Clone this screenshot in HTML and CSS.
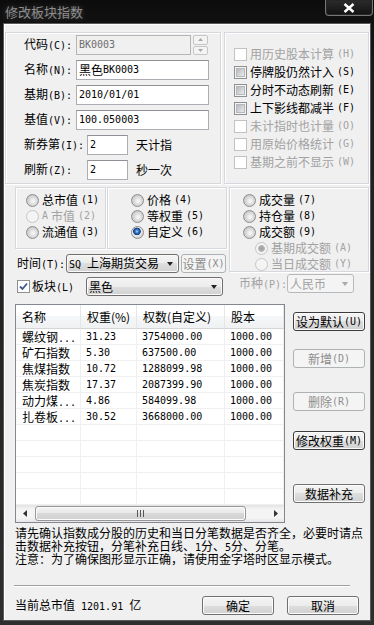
FILE: index.html
```html
<!DOCTYPE html>
<html lang="zh-CN">
<head>
  <meta charset="UTF-8" />
  <meta name="viewport" content="width=device-width, initial-scale=1.0" />
  <title>修改板块指数</title>
  <link rel="stylesheet" href="styles.css">
</head>
<body>
  <div class="window">
    <div class="titlebar">
      <div class="title">修改板块指数</div>
      <div class="close">
        <svg width="12" height="10" viewBox="0 0 12 10"><path d="M1.5 1 L10.5 9 M10.5 1 L1.5 9" stroke="#fff" stroke-width="2.4" /></svg>
      </div>
    </div>

    <div class="frame">
      <div class="content">

        <div class="top">
          <div class="panel fields">
            <div class="row">
              <span class="lab">代码<span class="l">(C):</span></span>
              <span class="input off code"><span class="l">BK0003</span></span>
              <span class="spin">
                <span class="sb"><svg width="5" height="3"><path d="M0 3 L2.5 0 L5 3Z" fill="#a8a8a8" /></svg></span>
                <span class="sb"><svg width="5" height="3"><path d="M0 0 L2.5 3 L5 0Z" fill="#a8a8a8" /></svg></span>
              </span>
            </div>
            <div class="row">
              <span class="lab">名称<span class="l">(N):</span></span>
              <span class="input wide">黑色<span class="l">BK0003</span></span>
            </div>
            <div class="row">
              <span class="lab">基期<span class="l">(B):</span></span>
              <span class="input wide"><span class="l">2010/01/01</span></span>
            </div>
            <div class="row">
              <span class="lab">基值<span class="l">(V):</span></span>
              <span class="input wide"><span class="l">100.050003</span></span>
            </div>
            <div class="row">
              <span class="lab long">新券第<span class="l">(I):</span></span>
              <span class="input small"><span class="l">2</span></span>
              <span class="after">天计指</span>
            </div>
            <div class="row">
              <span class="lab long">刷新<span class="l">(Z):</span></span>
              <span class="input small"><span class="l">2</span></span>
              <span class="after">秒一次</span>
            </div>
          </div>

          <div class="panel opts">
            <div class="chk off"><span class="cb"></span>用历史股本计算<span class="l">(H)</span></div>
            <div class="chk"><span class="cb"></span>停牌股仍然计入<span class="l">(S)</span></div>
            <div class="chk"><span class="cb"></span>分时不动态刷新<span class="l">(E)</span></div>
            <div class="chk"><span class="cb"></span>上下影线都减半<span class="l">(F)</span></div>
            <div class="chk off"><span class="cb"></span>未计指时也计量<span class="l">(O)</span></div>
            <div class="chk off"><span class="cb"></span>用原始价格统计<span class="l">(G)</span></div>
            <div class="chk off"><span class="cb"></span>基期之前不显示<span class="l">(W)</span></div>
          </div>
        </div>

        <div class="mid">
          <div class="mid-left">
            <div class="groups">
              <div class="group g1">
                <div class="opt"><span class="rb"></span>总市值<span class="l">(1)</span></div>
                <div class="opt off"><span class="rb"></span><span class="l">A</span>市值<span class="l">(2)</span></div>
                <div class="opt"><span class="rb"></span>流通值<span class="l">(3)</span></div>
              </div>
              <div class="group g2">
                <div class="opt"><span class="rb"></span>价格<span class="l">(4)</span></div>
                <div class="opt"><span class="rb"></span>等权重<span class="l">(5)</span></div>
                <div class="opt"><span class="rb on"></span>自定义<span class="l">(6)</span></div>
              </div>
            </div>
            <div class="row time">
              <span class="lab">时间<span class="l">(T):</span></span>
              <span class="combo c-time"><span><span class="l">SQ </span>上海期货交易</span><i class="arrow"></i></span>
              <span class="btn off set">设置<span class="l">(X)</span></span>
            </div>
            <div class="row block">
              <span class="cb on">
                <svg width="11" height="11" viewBox="0 0 11 11"><path d="M2 5.5 L4.5 8 L9 2.5" stroke="#3b5a8f" stroke-width="1.8" fill="none" /></svg>
              </span>
              <span class="lab">板块<span class="l">(L)</span></span>
              <span class="combo c-block"><span>黑色</span><i class="arrow"></i></span>
            </div>
          </div>

          <div class="mid-right">
            <div class="group g3">
              <div class="opt"><span class="rb"></span>成交量<span class="l">(7)</span></div>
              <div class="opt"><span class="rb"></span>持仓量<span class="l">(8)</span></div>
              <div class="opt"><span class="rb"></span>成交额<span class="l">(9)</span></div>
              <div class="opt sub off"><span class="rb on"></span>基期成交额<span class="l">(A)</span></div>
              <div class="opt sub off"><span class="rb"></span>当日成交额<span class="l">(Y)</span></div>
            </div>
            <div class="row cur off">
              <span class="lab">币种<span class="l">(P):</span></span>
              <span class="combo c-cur"><span>人民币</span><i class="arrow"></i></span>
            </div>
          </div>
        </div>

        <div class="lower">
          <div class="listview">
            <div class="grid">
              <div class="hd">名称</div>
              <div class="hd">权重(%)</div>
              <div class="hd">权数(自定义)</div>
              <div class="hd">股本</div>

              <div class="c">螺纹钢<span class="l">...</span></div>
              <div class="c l">31.23</div>
              <div class="c l">3754000.00</div>
              <div class="c l">1000.00</div>

              <div class="c">矿石指数</div>
              <div class="c l">5.30</div>
              <div class="c l">637500.00</div>
              <div class="c l">1000.00</div>

              <div class="c">焦煤指数</div>
              <div class="c l">10.72</div>
              <div class="c l">1288099.98</div>
              <div class="c l">1000.00</div>

              <div class="c">焦炭指数</div>
              <div class="c l">17.37</div>
              <div class="c l">2087399.90</div>
              <div class="c l">1000.00</div>

              <div class="c">动力煤<span class="l">...</span></div>
              <div class="c l">4.86</div>
              <div class="c l">584099.98</div>
              <div class="c l">1000.00</div>

              <div class="c">扎卷板<span class="l">...</span></div>
              <div class="c l">30.52</div>
              <div class="c l">3668000.00</div>
              <div class="c l">1000.00</div>

              <div class="c"></div><div class="c"></div><div class="c"></div><div class="c"></div>
              <div class="c"></div><div class="c"></div><div class="c"></div><div class="c"></div>
              <div class="c"></div><div class="c"></div><div class="c"></div><div class="c"></div>
              <div class="c"></div><div class="c"></div><div class="c"></div><div class="c"></div>
              <div class="c"></div><div class="c"></div><div class="c"></div><div class="c"></div>
            </div>
            <div class="hscroll">
              <span class="sarrow"><svg width="4" height="7"><path d="M4 0 L0 3.5 L4 7Z" fill="#333" /></svg></span>
              <span class="thumb">
                <svg width="7" height="7"><path d="M0.5 0 V7 M3.5 0 V7 M6.5 0 V7" stroke="#555" /></svg>
              </span>
              <span class="sarrow right"><svg width="4" height="7"><path d="M0 0 L4 3.5 L0 7Z" fill="#333" /></svg></span>
            </div>
          </div>

          <div class="side">
            <span class="btn dark b1">设为默认<span class="l">(U)</span></span>
            <span class="btn off b2">新增<span class="l">(D)</span></span>
            <span class="btn off b3">删除<span class="l">(R)</span></span>
            <span class="btn dark b4">修改权重<span class="l">(M)</span></span>
            <span class="btn b5">数据补充</span>
          </div>
        </div>

        <div class="note">
          <div>请先确认指数成分股的历史和当日分笔数据是否齐全，必要时请点</div>
          <div>击数据补充按钮，分笔补充日线、<span class="l">1</span>分、<span class="l">5</span>分、分笔。</div>
          <div>注意：为了确保图形显示正确，请使用金字塔时区显示模式。</div>
        </div>

        <div class="sep"></div>

        <div class="foot">
          <span class="total">当前总市值<span class="l"> 1201.91 </span>亿</span>
          <span class="btn ok">确定</span>
          <span class="btn cancel">取消</span>
        </div>

      </div>
    </div>
  </div>
</body>
</html>
```

FILE: styles.css
```css
* {
  box-sizing: border-box;
}

html, body {
  margin: 0;
  padding: 0;
  background: #000;
}

body {
  width: 374px;
  height: 625px;
  overflow: hidden;
  font: 12px/14px "Noto Sans CJK SC", sans-serif;
  color: #000;
}

/* half-width latin, like the bitmap font of the dialog */
.l {
  font: 10px/14px "DejaVu Sans Mono", monospace;
}

.window {
  width: 374px;
  height: 625px;
  display: flex;
  flex-direction: column;
  background: linear-gradient(#0c0c0c, #1d1d1d 80px, #2e2e2e);
}

.titlebar {
  height: 24px;
  flex-shrink: 0;
  display: flex;
  justify-content: space-between;
  align-items: flex-start;
}

.title {
  margin: 3px 0 0 5px;
  font-size: 13px;
  line-height: 17px;
  color: #8e8e8e;
  text-shadow: 0 0 6px rgba(255, 255, 255, 0.25);
}

.close {
  width: 48px;
  height: 16px;
  margin-right: 1px;
  border: 1px solid #777;
  border-top: 0;
  border-radius: 0 0 4px 4px;
  background: linear-gradient(#2c2c2c, #121212);
  box-shadow: inset 0 0 0 1px #262626;
  display: flex;
  align-items: center;
  justify-content: center;
}

.frame {
  flex: 1;
  display: flex;
  padding: 0 4px 5px;
}

.content {
  flex: 1;
  background: #f0f0f0;
  box-shadow: 0 0 0 1px #5a5a5a, inset 1px 1px 0 #fff;
  display: flex;
  flex-direction: column;
}

.off {
  color: #a2a2a2;
}

/* ---------- top panels ---------- */

.top {
  display: flex;
  gap: 3px;
  height: 152px;
  margin: 8px 0 0 1px;
}

.panel,
.group {
  border: 1px solid #d5d9dd;
  box-shadow: inset 1px 1px 0 #fff, 1px 1px 0 #fff;
}

.fields {
  width: 216px;
  padding: 2px 0 0 18px;
  display: flex;
  flex-direction: column;
  gap: 5px;
}

.row {
  display: flex;
  align-items: center;
  height: 20px;
  white-space: nowrap;
}

.fields .lab {
  width: 52px;
}

.fields .lab.long {
  width: 63px;
}

.input {
  height: 20px;
  display: flex;
  align-items: center;
  padding: 0 2px;
  background: #fff;
  border: 1px solid #abadb3;
  border-top-color: #8f9196;
}

.input.off {
  background: #f0f0f0;
  border-color: #b5b5b5;
  color: #6d6d6d;
}

.code {
  width: 115px;
}

.wide {
  width: 133px;
}

.small {
  width: 41px;
}

.after {
  margin-left: 8px;
}

.spin {
  width: 15px;
  height: 20px;
  margin-left: 2px;
  display: flex;
  flex-direction: column;
  gap: 1px;
}

.sb {
  flex: 1;
  border: 1px solid #c6c6c6;
  border-radius: 2px;
  background: #f4f4f4;
  display: flex;
  align-items: center;
  justify-content: center;
}

.opts {
  width: 145px;
  padding: 12px 0 0 9px;
}

.chk {
  display: flex;
  align-items: center;
  gap: 3px;
  height: 18px;
  white-space: nowrap;
}

/* ---------- checkbox / radio ---------- */

.cb {
  width: 13px;
  height: 13px;
  flex-shrink: 0;
  position: relative;
  border: 1px solid #8e8f8f;
  background: #f4f4f4;
}

.cb::after {
  content: "";
  position: absolute;
  inset: 1px;
  border: 1px solid #b4b8bc;
  background: linear-gradient(135deg, #b7bbbf, #e9eaeb);
}

.off .cb {
  border-color: #c2c2c2;
  background: #fff;
}

.off .cb::after {
  display: none;
}

.cb.on {
  display: flex;
  align-items: center;
  justify-content: center;
  background: #fff;
}

.cb.on::after {
  display: none;
}

.rb {
  width: 13px;
  height: 13px;
  flex-shrink: 0;
  border-radius: 50%;
  border: 1px solid #8e8f8f;
  background: radial-gradient(circle at 55% 55%, #fbfbfb 0, #e2e2e2 3px, #c9c9c9 6px);
}

.rb.on {
  background: radial-gradient(circle at 45% 40%, #9fd0ff 0, #2f6dbd 2px, #173f7d 3.5px, #f2f2f2 4.2px, #d2d2d2 6px);
}

.off .rb {
  border-color: #c6c6c6;
  background: #f4f4f4;
}

.off .rb.on {
  background: radial-gradient(circle, #9a9a9a 0, #b5b5b5 3px, #f4f4f4 3.8px);
}

/* ---------- middle section ---------- */

.mid {
  display: flex;
  gap: 2px;
  height: 110px;
  margin: 3px 0 0 11px;
}

.mid-left {
  width: 212px;
}

.groups {
  display: flex;
  gap: 1px;
  height: 62px;
}

.group {
  padding-top: 4px;
}

.g1 {
  width: 91px;
  padding-left: 10px;
}

.g2 {
  width: 120px;
  padding-left: 23px;
}

.opt {
  display: flex;
  align-items: center;
  gap: 3px;
  height: 16px;
  white-space: nowrap;
}

.time {
  height: 19px;
  margin-top: 5px;
}

.time .lab {
  width: 49px;
  margin-left: 2px;
}

.combo {
  height: 19px;
  display: flex;
  align-items: center;
  justify-content: space-between;
  padding-left: 2px;
  border: 1px solid #707070;
  border-radius: 3px;
  background: linear-gradient(#f4f4f4, #ececec 50%, #dedede 50%, #d2d2d2);
  box-shadow: inset 0 0 0 1px #fafafa;
}

.arrow {
  width: 0;
  height: 0;
  margin-right: 5px;
  border-left: 3.5px solid transparent;
  border-right: 3.5px solid transparent;
  border-top: 4px solid #222;
}

.c-time {
  width: 113px;
}

.set {
  width: 45px;
  margin-left: 2px;
}

.block {
  height: 19px;
  margin-top: 4px;
}

.block .cb {
  margin-left: 2px;
}

.block .lab {
  width: 54px;
  margin-left: 2px;
}

.c-block {
  width: 137px;
}

.mid-right {
  width: 140px;
}

.g3 {
  height: 85px;
  padding-left: 13px;
}

.sub {
  padding-left: 12px;
}

.cur {
  margin-top: 2px;
  height: 19px;
}

.cur .lab {
  width: 48px;
  margin-left: 10px;
}

.c-cur {
  width: 67px;
  border-color: #b7babc;
  background: #f4f4f4;
  box-shadow: none;
}

.c-cur .arrow {
  border-top-color: #a8a8a8;
}

/* ---------- buttons ---------- */

.btn {
  height: 19px;
  display: flex;
  align-items: center;
  justify-content: center;
  white-space: nowrap;
  border: 1px solid #707070;
  border-radius: 3px;
  background: linear-gradient(#f4f4f4, #ececec 50%, #dedede 50%, #d0d0d0);
  box-shadow: inset 0 0 0 1px #fbfbfb;
}

.btn.dark {
  border-color: #3c3c3c;
}

.btn.off {
  color: #8c8c8c;
  border-color: #adb2b5;
  background: #f4f4f4;
  box-shadow: none;
}

/* ---------- list ---------- */

.lower {
  display: flex;
  gap: 8px;
  margin: 7px 0 0 11px;
}

.listview {
  width: 270px;
  height: 219px;
  display: flex;
  flex-direction: column;
  border: 1px solid #828790;
  background: #fff;
}

.grid {
  height: 200px;
  display: grid;
  grid-template-columns: 65px 56px 88px 1fr;
  grid-template-rows: 24px repeat(11, 16px);
  overflow: hidden;
}

.hd {
  display: flex;
  align-items: center;
  padding-left: 6px;
  white-space: nowrap;
  border-right: 1px solid #e3e6ea;
  border-bottom: 1px solid #d5d5d5;
  background: linear-gradient(#fff, #fff 50%, #f6f7f9 50%, #f0f1f3);
}

.c {
  padding-left: 5px;
  line-height: 15px;
  white-space: nowrap;
  overflow: hidden;
  border-right: 1px solid #f0f0f0;
  border-bottom: 1px solid #f0f0f0;
}

.c.l {
  font-size: 10px;
  line-height: 15px;
}

.grid .c:nth-child(4n+1) {
  padding-left: 6px;
}

.hscroll {
  height: 17px;
  display: flex;
  align-items: center;
  background: linear-gradient(#e3e3e3, #f4f4f4 25%, #f4f4f4 75%, #e6e6e6);
}

.sarrow {
  width: 17px;
  height: 17px;
  display: flex;
  align-items: center;
  justify-content: center;
}

.sarrow.right {
  margin-left: auto;
}

.thumb {
  width: 211px;
  height: 15px;
  margin-left: 2px;
  display: flex;
  align-items: center;
  justify-content: center;
  border: 1px solid #979797;
  border-radius: 3px;
  background: linear-gradient(#f3f3f3, #e8e8e8 50%, #d9d9d9 50%, #d0d0d0);
  box-shadow: inset 0 0 0 1px #fbfbfb;
}

.side {
  width: 72px;
  display: flex;
  flex-direction: column;
}

.b1 { margin-top: 8px; }
.b2 { margin-top: 18px; }
.b3 { margin-top: 24px; }
.b4 { margin-top: 20px; }
.b5 { margin-top: 34px; }

/* ---------- note and footer ---------- */

.note {
  margin: 3px 0 0 11px;
  white-space: nowrap;
}

.note div {
  height: 13px;
  line-height: 13px;
}

.note .l {
  line-height: 13px;
}

.sep {
  width: 336px;
  height: 2px;
  margin: 20px 0 0 10px;
  border-top: 1px solid #a0a0a0;
  border-bottom: 1px solid #fff;
}

.foot {
  display: flex;
  align-items: center;
  height: 19px;
  margin: 9px 11px 0 11px;
}

.total {
  margin-right: auto;
  white-space: nowrap;
}

.ok,
.cancel {
  width: 72px;
}

.cancel {
  margin-left: 13px;
}
```
